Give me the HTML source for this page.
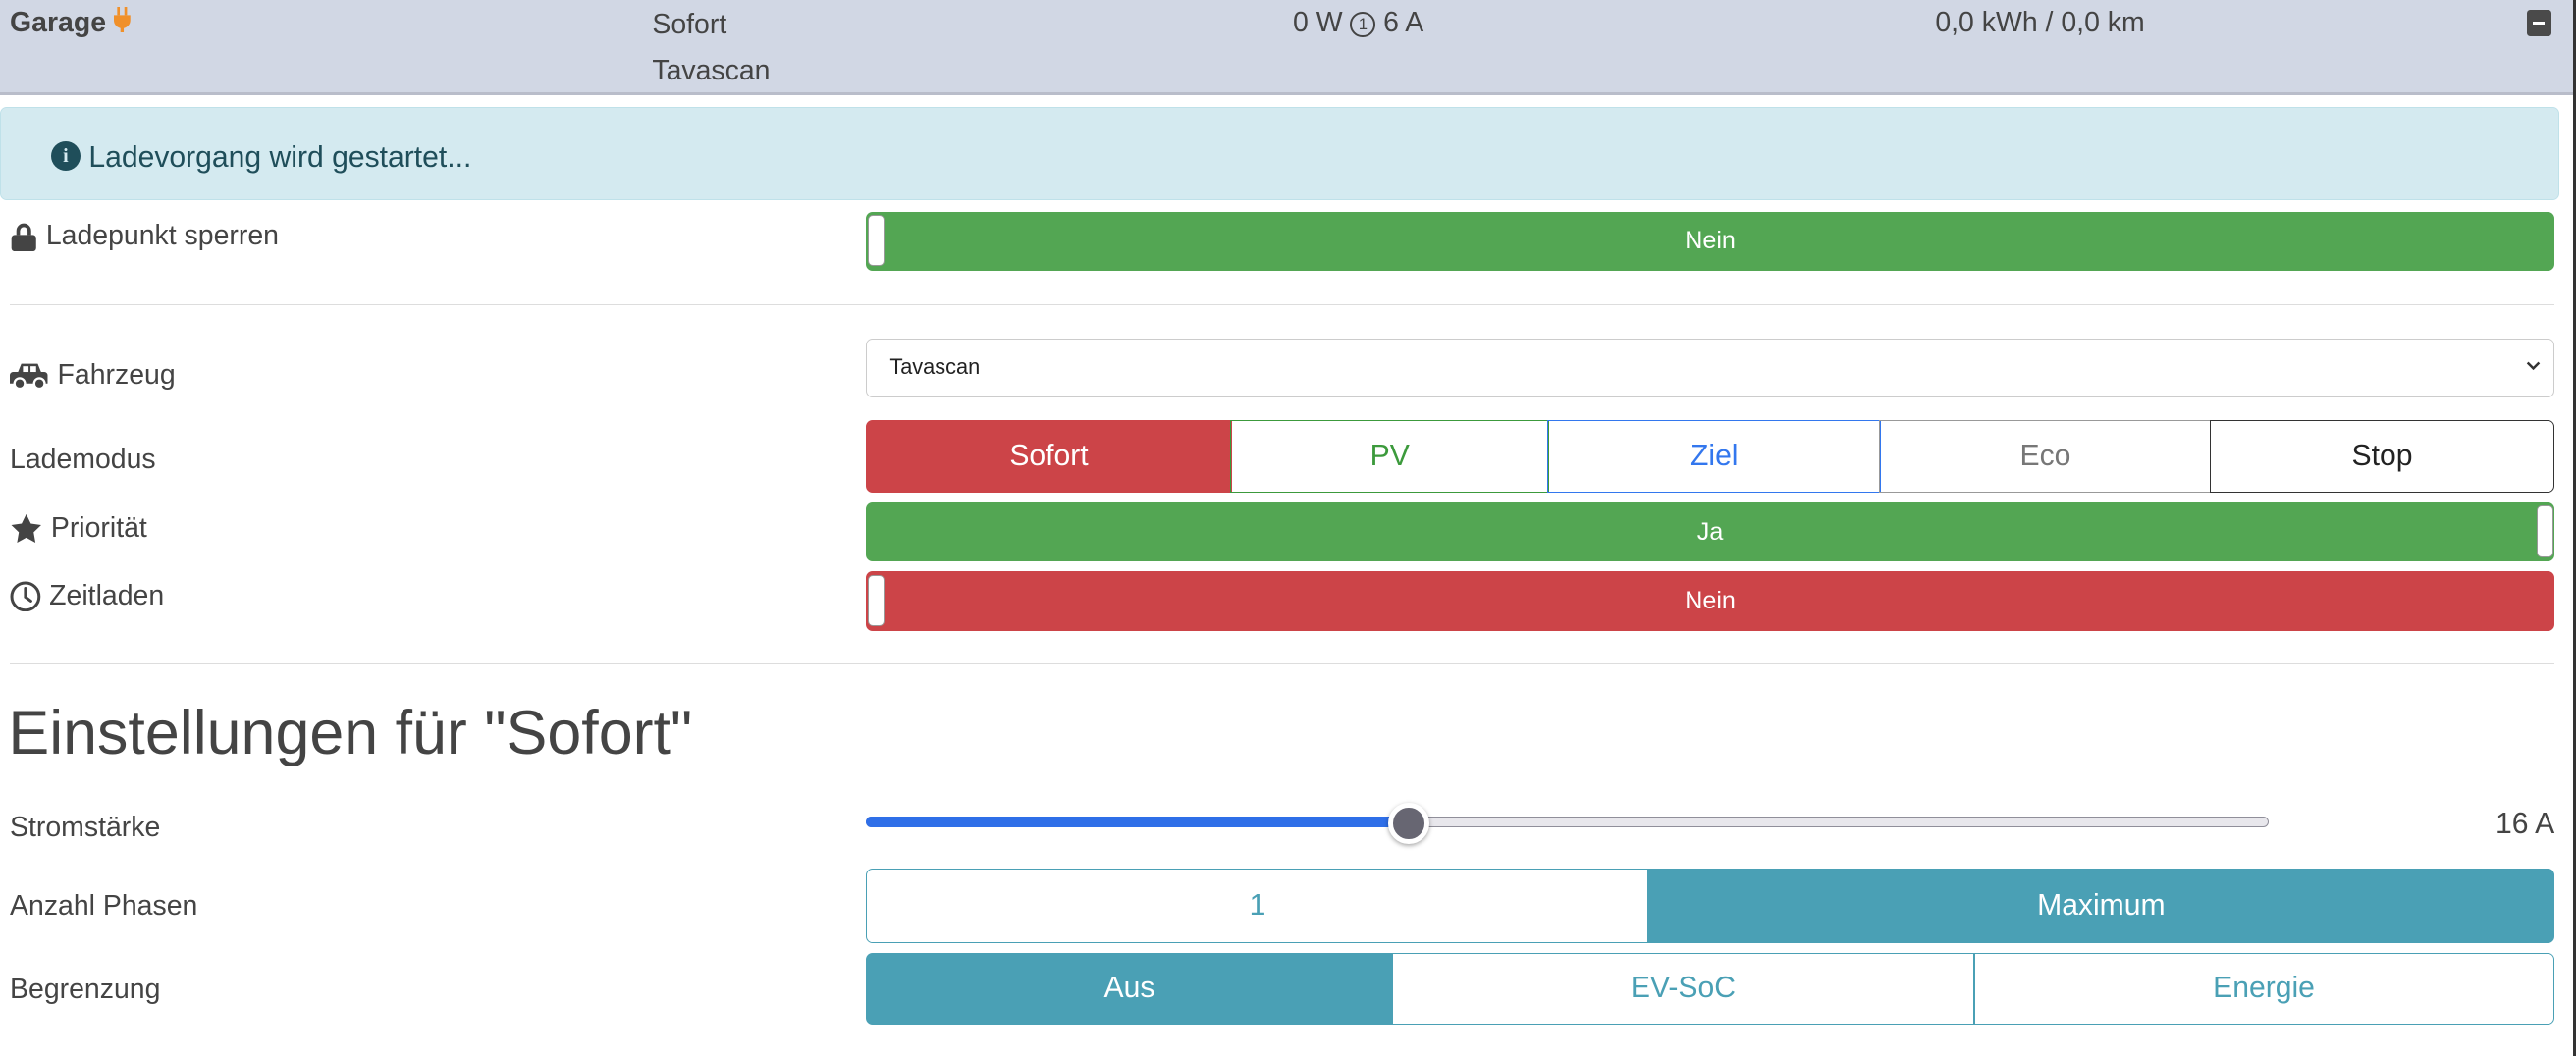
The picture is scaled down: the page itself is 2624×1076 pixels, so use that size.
<!DOCTYPE html>
<html><head><meta charset="utf-8"><style>
html,body{margin:0;padding:0;background:#fff;overflow:hidden}
body{width:2624px;height:1076px}
#w{position:relative;width:1568px;height:643px;zoom:1.67347;font-family:"Liberation Sans",sans-serif;color:#444;font-size:17px}
.a{position:absolute}
.lbl{position:absolute;left:6px;line-height:20px;color:#444;display:flex;align-items:center;gap:5px}
.tog{position:absolute;left:527px;width:1028px;height:36px;border-radius:4px;color:#fff;font-size:15px;display:flex;align-items:center;justify-content:center}
.knob{position:absolute;top:2px;width:9px;height:30px;background:#fff;border-radius:3px;border:1px solid #999}
.btn{position:absolute;height:44px;box-sizing:border-box;display:flex;align-items:center;justify-content:center;font-size:18px}
hr{position:absolute;left:6px;width:1549px;margin:0;border:0;border-top:1px solid #ddd}
</style></head><body><div id="w">
<div class="a" style="left:0;top:0;width:1566px;height:56px;background:#d1d7e4;border-bottom:2px solid #b9bdca"></div>
<div class="a" style="left:1566px;top:0;width:2px;height:643px;background:#333"></div>
<div class="a" style="left:6px;top:4px;font-weight:bold;font-size:17px;color:#444">Garage <svg width="10" height="16" viewBox="0 0 10 16" style="vertical-align:-1px"><rect x="2" y="0" width="1.6" height="5" fill="#f0902a"/><rect x="6.4" y="0" width="1.6" height="5" fill="#f0902a"/><path d="M0 5h10v3a5 5 0 0 1-4 5v3h-2v-3a5 5 0 0 1-4-5z" fill="#f0902a"/></svg></div>
<div class="a" style="left:397px;top:1px;line-height:28px">Sofort<br>Tavascan</div>
<div class="a" style="left:787px;top:4px">0 W <span style="display:inline-block;width:13px;height:13px;border:1.6px solid #444;border-radius:50%;font-size:10px;text-align:center;line-height:13px;vertical-align:1px;box-sizing:content-box">1</span> 6 A</div>
<div class="a" style="left:1178px;top:4px">0,0 kWh / 0,0 km</div>
<div class="a" style="left:1538px;top:6px;width:15px;height:16px;background:#4a4a4a;border-radius:2px"><div style="position:absolute;left:4px;top:7px;width:7px;height:2px;background:#fff"></div></div>
<div class="a" style="left:0;top:65px;width:1558px;height:57px;background:#d4eaf0;border:1px solid #bfe1e9;border-radius:4px;box-sizing:border-box"></div>
<div class="a" style="left:31px;top:86px;width:18px;height:18px;border-radius:50%;background:#1f4e5a;color:#d4eaf0;font-size:12px;font-weight:bold;text-align:center;line-height:18px;font-family:'Liberation Serif',serif">i</div>
<div class="a" style="left:54px;top:86px;color:#1f4e5a;font-size:18px">Ladevorgang wird gestartet...</div>
<div class="lbl" style="top:134px"><svg width="17" height="18" viewBox="0 0 17 18"><path d="M4 8V5.5a4.5 4.5 0 0 1 9 0V8h-2.2V5.5a2.3 2.3 0 0 0-4.6 0V8z" fill="#444"/><rect x="1" y="8" width="15" height="10" rx="2" fill="#444"/></svg>Ladepunkt sperren</div>
<div class="tog" style="top:129px;background:#53a653">Nein<div class="knob" style="left:1px"></div></div>
<hr style="top:185px">
<div class="lbl" style="top:219px"><svg width="24" height="17" viewBox="0 0 24 17"><path d="M5 6l2-5h10l2 5h2a2 2 0 0 1 2 2v5h-23v-5a2 2 0 0 1 2-2z" fill="#444"/><rect x="8" y="2.5" width="3.4" height="3.5" fill="#fff"/><rect x="12.6" y="2.5" width="3.4" height="3.5" fill="#fff"/><circle cx="6" cy="13" r="3.2" fill="#444" stroke="#fff" stroke-width="1.4"/><circle cx="18" cy="13" r="3.2" fill="#444" stroke="#fff" stroke-width="1.4"/></svg>Fahrzeug</div>
<div class="a" style="left:527px;top:206px;width:1028px;height:36px;border:1px solid #ccc;border-radius:4px;box-sizing:border-box;font-size:13px;color:#222;line-height:34px;padding-left:14px">Tavascan<svg class="a" style="right:8px;top:13px" width="9" height="7" viewBox="0 0 9 7"><path d="M1 1.5l3.5 3.5 3.5-3.5" stroke="#333" stroke-width="1.5" fill="none"/></svg></div>
<div class="lbl" style="top:270px">Lademodus</div>
<div class="btn" style="left:527px;top:256px;width:223px;background:#cc4448;color:#fff;border-radius:4px 0 0 4px">Sofort</div>
<div class="btn" style="left:749px;top:256px;width:194px;border:1px solid #3c9a3c;color:#3c9a3c">PV</div>
<div class="btn" style="left:942px;top:256px;width:203px;border:1px solid #3377ee;color:#3377ee">Ziel</div>
<div class="btn" style="left:1144px;top:256px;width:202px;border:1px solid #999;color:#777">Eco</div>
<div class="btn" style="left:1345px;top:256px;width:210px;border:1px solid #333;color:#222;border-radius:0 4px 4px 0">Stop</div>
<div class="lbl" style="top:312px"><svg width="20" height="19" viewBox="0 0 20 19"><path d="M10 0.5l2.8 5.8 6.3.9-4.6 4.4 1.1 6.3L10 14.9l-5.6 3 1.1-6.3L.9 7.2l6.3-.9z" fill="#444"/></svg>Priorität</div>
<div class="tog" style="top:306px;background:#53a653">Ja<div class="knob" style="right:1px"></div></div>
<div class="lbl" style="top:353px"><svg width="19" height="19" viewBox="0 0 19 19"><circle cx="9.5" cy="9.5" r="8.3" fill="none" stroke="#444" stroke-width="1.8"/><path d="M9.5 4.5v5.3l3.3 2.4" fill="none" stroke="#444" stroke-width="1.8" stroke-linecap="round"/></svg>Zeitladen</div>
<div class="tog" style="top:348px;background:#cc4448">Nein<div class="knob" style="left:1px"></div></div>
<hr style="top:404px">
<div class="a" style="left:5px;top:425px;font-size:37.5px;color:#444">Einstellungen für "Sofort"</div>
<div class="lbl" style="top:494px">Stromstärke</div>
<div class="a" style="left:527px;top:497px;width:854px;height:7px;background:#e8e7ec;border:1px solid #908f9a;border-radius:4px;box-sizing:border-box"></div>
<div class="a" style="left:527px;top:497px;width:330px;height:7px;background:#2f6fe8;border-radius:4px 0 0 4px"></div>
<div class="a" style="left:845px;top:489px;width:19px;height:19px;border-radius:50%;background:#676672;border:3px solid #fff;box-shadow:0 1px 3px rgba(0,0,0,.35)"></div>
<div class="a" style="left:1500px;top:492px;width:55px;text-align:right;font-size:18px">16 A</div>
<div class="lbl" style="top:542px">Anzahl Phasen</div>
<div class="btn" style="left:527px;top:529px;width:477px;height:45px;border:1px solid #4aa0b5;color:#4aa0b5;border-radius:4px 0 0 4px">1</div>
<div class="btn" style="left:1003px;top:529px;width:552px;height:45px;background:#4aa0b5;color:#fff;border-radius:0 4px 4px 0">Maximum</div>
<div class="lbl" style="top:593px">Begrenzung</div>
<div class="btn" style="left:527px;top:580px;width:321px;height:44px;background:#4aa0b5;color:#fff;border-radius:4px 0 0 4px">Aus</div>
<div class="btn" style="left:847px;top:580px;width:355px;height:44px;border:1px solid #4aa0b5;color:#4aa0b5">EV-SoC</div>
<div class="btn" style="left:1201px;top:580px;width:354px;height:44px;border:1px solid #4aa0b5;color:#4aa0b5;border-radius:0 4px 4px 0">Energie</div>
</div></body></html>
